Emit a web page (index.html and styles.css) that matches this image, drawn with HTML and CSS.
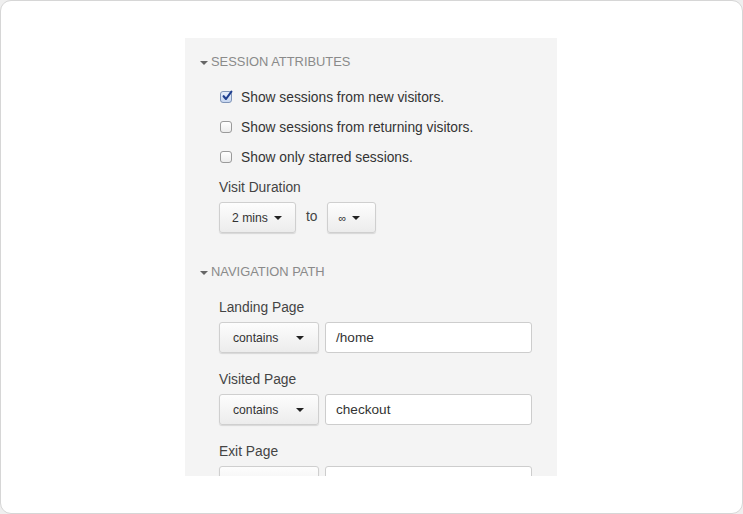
FILE: index.html
```html
<!DOCTYPE html>
<html>
<head>
<meta charset="utf-8">
<link rel="stylesheet" href="styles.css">
</head>
<body>
<div class="card">
  <div class="panel">
    <div class="section-head"><span class="tri"></span>SESSION ATTRIBUTES</div>
    <div class="section-body">
      <div class="check-row">
        <span class="cb checked"><svg width="12" height="12" viewBox="0 0 12 12"><path d="M2.6 6.2 L5 9 L10.4 1.6" fill="none" stroke="#1f3f8f" stroke-width="2.1" stroke-linecap="round" stroke-linejoin="round"/></svg></span>
        <span class="check-label">Show sessions from new visitors.</span>
      </div>
      <div class="check-row">
        <span class="cb"></span>
        <span class="check-label">Show sessions from returning visitors.</span>
      </div>
      <div class="check-row">
        <span class="cb"></span>
        <span class="check-label">Show only starred sessions.</span>
      </div>
      <div class="field-label first">Visit Duration</div>
      <div class="duration">
        <div class="btn btn-mins">2 mins <span class="caret"></span></div>
        <span class="to">to</span>
        <div class="btn btn-inf"><span class="inf">∞</span> <span class="caret"></span></div>
      </div>
    </div>
    <div class="section-head nav"><span class="tri"></span>NAVIGATION PATH</div>
    <div class="section-body">
      <div class="field-label">Landing Page</div>
      <div class="filter">
        <div class="btn select">contains <span class="caret"></span></div>
        <div class="input">/home</div>
      </div>
      <div class="field-label">Visited Page</div>
      <div class="filter">
        <div class="btn select">contains <span class="caret"></span></div>
        <div class="input">checkout</div>
      </div>
      <div class="field-label">Exit Page</div>
      <div class="filter">
        <div class="btn select"></div>
        <div class="input"></div>
      </div>
    </div>
  </div>
</div>
</body>
</html>
```

FILE: styles.css
```css
html, body {
  margin: 0;
  padding: 0;
  background: #efefef;
}
body {
  width: 743px;
  height: 514px;
  font-family: "Liberation Sans", Arial, sans-serif;
  color: #333;
}
.card {
  box-sizing: border-box;
  width: 743px;
  height: 514px;
  background: #fff;
  border: 1px solid #d6d6d6;
  border-radius: 11px;
  display: flex;
  padding-top: 37px;
  padding-left: 184px;
}
.panel {
  box-sizing: border-box;
  width: 372px;
  height: 438px;
  background: #f4f4f4;
  overflow: hidden;
  padding: 14px 0 0 15px;
}
.section-head {
  height: 20px;
  line-height: 20px;
  font-size: 12.9px;
  color: #8a8a8a;
  display: flex;
  align-items: center;
}
.section-head.nav {
  margin-top: 29px;
}
.tri {
  width: 0;
  height: 0;
  border-left: 4px solid transparent;
  border-right: 4px solid transparent;
  border-top: 4px solid #666;
  margin-right: 3px;
  margin-top: 1px;
}
.section-body {
  padding-left: 19px;
}
.check-row {
  height: 30px;
  display: flex;
  align-items: center;
  font-size: 13.8px;
}
.section-head + .section-body .check-row:first-child {
  margin-top: 10px;
}
.cb {
  box-sizing: border-box;
  width: 12px;
  height: 12px;
  margin-left: 1px;
  margin-right: 9px;
  border: 1px solid #9a9a9a;
  border-radius: 3px;
  background: linear-gradient(#fff, #ececec);
  position: relative;
}
.cb.checked {
  border-color: #7f94b8;
  background: linear-gradient(#e6eefb, #c6d6f0);
}
.cb svg {
  position: absolute;
  left: 0;
  top: -2px;
}
.check-label {
  color: #333;
}
.field-label {
  height: 20px;
  line-height: 23px;
  font-size: 13.8px;
  color: #444;
  margin-top: 15px;
}
.field-label.first {
  margin-top: 4px;
}
.section-head + .section-body > .field-label:first-child {
  margin-top: 14px;
}
.duration {
  margin-top: 6px;
  display: flex;
  align-items: center;
}
.btn {
  box-sizing: border-box;
  height: 31px;
  border: 1px solid #cfcfcf;
  border-radius: 3px;
  background: linear-gradient(#fdfdfd, #ececec);
  box-shadow: 0 1px 1px rgba(0,0,0,0.12);
  display: flex;
  align-items: center;
  font-size: 12.2px;
  color: #333;
}
.btn-mins {
  width: 77px;
  padding-left: 12px;
}
.btn-mins .caret {
  margin-left: 6px;
}
.to {
  font-size: 13.8px;
  color: #444;
  margin: 0 9px 0 10px;
  position: relative;
  top: -1px;
}
.btn-inf {
  width: 49px;
  padding-left: 11px;
}
.inf {
  font-size: 11px;
}
.btn-inf .caret {
  margin-left: 6px;
}
.caret {
  display: inline-block;
  width: 0;
  height: 0;
  border-left: 4px solid transparent;
  border-right: 4px solid transparent;
  border-top: 4px solid #222;
}
.filter {
  margin-top: 6px;
  display: flex;
  gap: 6px;
}
.select {
  width: 100px;
  padding-left: 13px;
}
.select .caret {
  margin-left: auto;
  margin-right: 14px;
}
.input {
  box-sizing: border-box;
  width: 207px;
  height: 31px;
  border: 1px solid #cdcdcd;
  border-radius: 3px;
  background: #fff;
  font-size: 13.6px;
  color: #333;
  padding-left: 10px;
  display: flex;
  align-items: center;
}
```
